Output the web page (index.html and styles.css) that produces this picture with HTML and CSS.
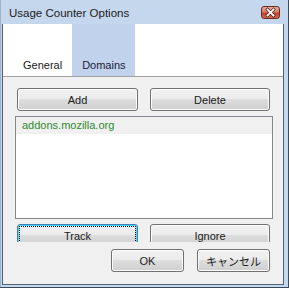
FILE: index.html
```html
<!DOCTYPE html>
<html>
<head>
<meta charset="utf-8">
<link rel="stylesheet" href="styles.css">
</head>
<body>
<div class="window">
  <div class="titlebar">
    <span class="title">Usage Counter Options</span>
    <span class="close">
      <svg width="17" height="11" viewBox="0 0 17 11">
        <path d="M5.5 2.5 L11.5 8.5 M11.5 2.5 L5.5 8.5" stroke="#5a1a12" stroke-width="3.2" stroke-linecap="square"/>
        <path d="M5.5 2.5 L11.5 8.5 M11.5 2.5 L5.5 8.5" stroke="#ffffff" stroke-width="1.8" stroke-linecap="square"/>
      </svg>
    </span>
  </div>
  <div class="client">
    <div class="header">
      <div class="tab">General</div>
      <div class="tab selected">Domains</div>
    </div>
    <div class="panel">
      <div class="btnrow">
        <button class="btn">Add</button>
        <button class="btn">Delete</button>
      </div>
      <div class="listbox">
        <div class="item">addons.mozilla.org</div>
      </div>
      <div class="btnrow clipped">
        <button class="btn focused">Track</button>
        <button class="btn">Ignore</button>
      </div>
      <div class="dlgrow">
        <button class="btn dlg">OK</button>
        <button class="btn dlg jp">キャンセル</button>
      </div>
    </div>
  </div>
</div>
</body>
</html>
```

FILE: styles.css
```css
html, body {
  margin: 0;
  padding: 0;
}
body {
  font-family: "Liberation Sans", Arial, sans-serif;
  font-size: 11px;
  color: #000;
}
.window {
  width: 289px;
  height: 288px;
  box-sizing: border-box;
  background: #c5d7ed;
  border-right: 1px solid #3b4a5c;
  border-bottom: 1px solid #3b4a5c;
  padding: 0 4px 2px 2px;
  display: flex;
  flex-direction: column;
  box-shadow: inset 1px 0 0 #9fb2c8;
}
.titlebar {
  height: 24px;
  flex: none;
  display: flex;
  align-items: center;
  justify-content: space-between;
  padding-left: 7px;
  padding-right: 3px;
  box-sizing: border-box;
  margin-right: -4px;
}
.title {
  font-size: 11.5px;
  color: #1b1b1b;
  padding-top: 1px;
}
.close {
  width: 17px;
  height: 11px;
  display: flex;
  border: 1px solid #6e2a20;
  border-radius: 3px;
  background: linear-gradient(#e7aa9f 0%, #d87c6c 45%, #c2422e 55%, #cd6a52 100%);
  margin-top: 1px;
  margin-right: 5px;
}
.client {
  flex: 1;
  display: flex;
  flex-direction: column;
  border: 1px solid #4d6076;
  border-top: none;
  background: #f0f0f0;
}
.header {
  height: 52px;
  flex: none;
  background: #fff;
  border-bottom: 1px solid #a0a0a0;
  display: flex;
  padding-left: 10px;
}
.tab {
  display: flex;
  align-items: flex-end;
  padding: 0 10px 5px 10px;
  color: #1a1a1a;
  font-size: 11px;
}
.tab.selected {
  background: #c1d2ec;
  color: #1a1a3a;
  padding-right: 9px;
}
.panel {
  flex: 1;
  display: flex;
  flex-direction: column;
  padding: 11px 10px 0 12px;
}
.btnrow {
  display: grid;
  grid-template-columns: 121px 120px;
  column-gap: 12px;
  padding-left: 2px;
}
.btn {
  height: 23px;
  box-sizing: border-box;
  border: 1px solid #707070;
  border-radius: 3px;
  background: linear-gradient(#f2f2f2 0%, #ebebeb 49%, #dddddd 50%, #cfcfcf 100%);
  font-family: "Liberation Sans", Arial, sans-serif;
  font-size: 11px;
  font-weight: 400;
  color: #1a1a1a;
  padding: 0;
  margin: 0;
  box-shadow: inset 0 0 0 1px #fcfcfc;
}
.listbox {
  margin-top: 5px;
  height: 103px;
  box-sizing: border-box;
  border: 1px solid #828790;
  background: #fff;
}
.item {
  height: 17px;
  background: #f0f0f0;
  color: #2e8b2e;
  padding-left: 6px;
  line-height: 17px;
  font-size: 11px;
}
.clipped {
  margin-top: 5px;
  height: 18px;
  overflow: hidden;
}
.btn.focused {
  border-color: #3c7fb1;
  box-shadow: inset 0 0 0 1px #48d8fb;
  outline: 1px dotted #000;
  outline-offset: -3px;
}
.dlgrow {
  margin-top: 7px;
  display: flex;
  justify-content: flex-end;
  gap: 13px;
  padding-right: 3px;
}
.btn.dlg {
  width: 73px;
}
.btn.jp {
  font-family: "Noto Sans CJK JP", "Liberation Sans", sans-serif;
  font-size: 11px;
}
```
